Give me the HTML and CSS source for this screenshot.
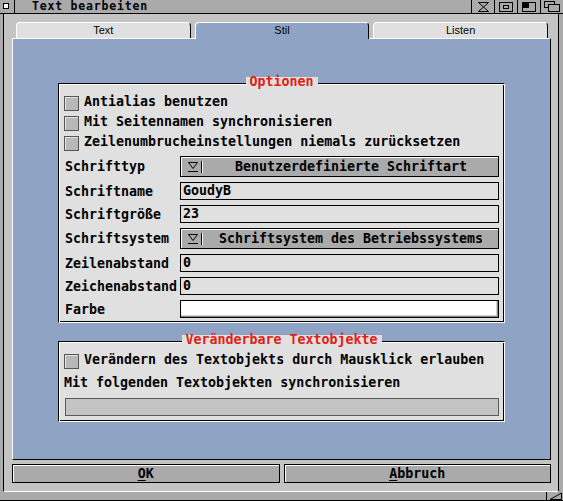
FILE: index.html
```html
<!DOCTYPE html>
<html lang="de">
<head>
<meta charset="utf-8">
<title>Text bearbeiten</title>
<link rel="stylesheet" href="styles.css">
</head>
<body>
<div class="window">
  <div class="titlebar">
    <div class="close-gadget">
      <svg width="7" height="7" viewBox="0 0 7 7"><rect x="0.5" y="0.5" width="5" height="5" fill="#fff" stroke="#000"/></svg>
    </div>
    <div class="title">Text bearbeiten</div>
    <div class="gadgets">
      <div class="gadget">
        <svg width="13" height="10" viewBox="0 0 13 10"><path d="M1.5 0.5 H11.5 L6.5 5 L11.5 9.5 H1.5 L6.5 5 Z" fill="none" stroke="#000"/></svg>
      </div>
      <div class="gadget">
        <svg width="14" height="10" viewBox="0 0 14 10"><rect x="0.5" y="0.5" width="13" height="9" fill="none" stroke="#000"/><rect x="4.5" y="3.5" width="5" height="3" fill="none" stroke="#000"/></svg>
      </div>
      <div class="gadget">
        <svg width="14" height="10" viewBox="0 0 14 10"><rect x="0.5" y="0.5" width="13" height="9" fill="none" stroke="#000"/><rect x="1" y="1" width="6" height="5" fill="#000"/></svg>
      </div>
      <div class="gadget">
        <svg width="16" height="11" viewBox="0 0 16 11"><rect x="0.5" y="0.5" width="10" height="6" fill="none" stroke="#000"/><rect x="4.5" y="3.5" width="11" height="7" fill="#aaa" stroke="#000"/></svg>
      </div>
    </div>
  </div>

  <div class="frame">
    <div class="tabs">
      <div class="tab">Text</div>
      <div class="tab active">Stil</div>
      <div class="tab">Listen</div>
    </div>

    <div class="panel">
      <div class="group">
        <div class="group-title">Optionen</div>
        <div class="form">
          <div class="check"><span class="box"></span><span class="check-text">Antialias benutzen</span></div>
          <div class="check"><span class="box"></span><span class="check-text">Mit Seitennamen synchronisieren</span></div>
          <div class="check"><span class="box"></span><span class="check-text">Zeilenumbrucheinstellungen niemals zurücksetzen</span></div>

          <span class="label">Schrifttyp</span>
          <div class="cycle">
            <svg class="cycle-icon" width="17" height="12" viewBox="0 0 17 12"><path d="M1.5 1.5 H10.5 L6 7.5 Z" fill="none" stroke="#000"/><path d="M1 10.5 H11" stroke="#000"/><path d="M14.5 0 V12" stroke="#000"/><path d="M15.5 0 V12" stroke="#fff"/></svg>
            <span class="cycle-text">Benutzerdefinierte Schriftart</span>
          </div>

          <span class="label">Schriftname</span>
          <div class="field">GoudyB</div>

          <span class="label">Schriftgröße</span>
          <div class="field">23</div>

          <span class="label">Schriftsystem</span>
          <div class="cycle">
            <svg class="cycle-icon" width="17" height="12" viewBox="0 0 17 12"><path d="M1.5 1.5 H10.5 L6 7.5 Z" fill="none" stroke="#000"/><path d="M1 10.5 H11" stroke="#000"/><path d="M14.5 0 V12" stroke="#000"/><path d="M15.5 0 V12" stroke="#fff"/></svg>
            <span class="cycle-text">Schriftsystem des Betriebssystems</span>
          </div>

          <span class="label">Zeilenabstand</span>
          <div class="field">0</div>

          <span class="label">Zeichenabstand</span>
          <div class="field">0</div>

          <span class="label">Farbe</span>
          <div class="field color"></div>
        </div>
      </div>

      <div class="group">
        <div class="group-title">Veränderbare Textobjekte</div>
        <div class="stack">
          <div class="check"><span class="box"></span><span class="check-text">Verändern des Textobjekts durch Mausklick erlauben</span></div>
          <div class="text-line">Mit folgenden Textobjekten synchronisieren</div>
          <div class="list"></div>
        </div>
      </div>
    </div>

    <div class="buttons">
      <div class="btn"><u>O</u>K</div>
      <div class="btn"><u>A</u>bbruch</div>
    </div>
  </div>

  <div class="bottombar">
    <div class="sizer">
      <svg width="13" height="8" viewBox="0 0 13 8"><path d="M1 7.5 L12.5 1 V7.5 Z" fill="none" stroke="#000"/></svg>
    </div>
  </div>
</div>
</body>
</html>
```

FILE: styles.css
```css
* {
  box-sizing: border-box;
}

html,
body {
  margin: 0;
  padding: 0;
}

body {
  width: 563px;
  height: 501px;
  overflow: hidden;
  background: #aaaaaa;
  font-family: "DejaVu Sans Mono", "Liberation Mono", monospace;
  font-weight: bold;
  font-size: 13.3px;
  color: #000;
}

.window {
  display: flex;
  flex-direction: column;
  height: 501px;
}

/* ---------- title bar ---------- */
.titlebar {
  height: 14px;
  flex: none;
  display: flex;
  align-items: stretch;
  background: #aaaaaa;
  border-bottom: 1px solid #000;
}

.close-gadget {
  width: 15px;
  border-right: 1px solid #000;
  display: flex;
  align-items: flex-start;
  padding: 3px 0 0 3px;
}

.title {
  padding-left: 17px;
  font-size: 11.5px;
  letter-spacing: 0.8px;
  line-height: 13px;
}

.gadgets {
  margin-left: auto;
  display: flex;
}

.gadget {
  width: 23px;
  border-left: 1px solid #000;
  display: flex;
  align-items: center;
  justify-content: center;
}

/* ---------- frame ---------- */
.frame {
  flex: none;
  height: 478px;
  margin: 0 4px 0 3px;
  border-left: 1px solid #000;
  border-right: 1px solid #000;
  border-bottom: 1px solid #fff;
  background: #c4c4c4;
  padding: 8px 7px 8px 8px;
  display: flex;
  flex-direction: column;
}

.tabs {
  display: flex;
  align-items: flex-start;
  gap: 4px;
  height: 16px;
  padding: 0 3px 0 4px;
}

.tab {
  flex: 1;
  height: 16px;
  background: #e0e0e0;
  border-top: 1px solid #fff;
  border-left: 1px solid #fff;
  border-right: 1px solid #000;
  border-radius: 4px 4px 0 0;
  font-family: "Liberation Sans", Arial, sans-serif;
  font-weight: normal;
  font-size: 11px;
  line-height: 15px;
  text-align: center;
}

.tab.active {
  background: #8fa4c4;
  height: 17px;
  position: relative;
  z-index: 1;
}

.panel {
  height: 422px;
  flex: none;
  background: #8fa4c4;
  border: 1px solid;
  border-color: #fff #000 #000 #fff;
  padding: 44px 45px 0 45px;
  display: flex;
  flex-direction: column;
  gap: 18px;
}

/* ---------- groups ---------- */
.group {
  position: relative;
  background: #e0e0e0;
  border: 1px solid;
  border-color: #000 #fff #fff #000;
  box-shadow: inset 1px 1px 0 #fff, inset -1px -1px 0 #000;
  padding: 12px 5px 4px 5px;
}

.group + .group {
  padding-bottom: 5px;
}

.group-title {
  position: absolute;
  top: -7px;
  left: 50%;
  transform: translateX(-50%);
  height: 10px;
  line-height: 10px;
  padding: 0 4px;
  background: #e0e0e0;
  color: #e02010;
  white-space: nowrap;
}

.form {
  display: grid;
  grid-template-columns: 116px 1fr;
  row-gap: 5px;
}

.check {
  grid-column: 1 / -1;
  display: flex;
  align-items: flex-start;
  gap: 5px;
  height: 15px;
}

.box {
  width: 15px;
  height: 15px;
  flex: none;
  border: 1px solid #555;
  background: #b8b8b8;
  box-shadow: inset 1px 1px 0 #e4e4e4;
}

.check-text {
  line-height: 12px;
  white-space: nowrap;
}

.label {
  align-self: center;
  line-height: 15px;
  margin-left: 1px;
  white-space: nowrap;
}

.cycle {
  height: 21px;
  border: 1px solid #000;
  box-shadow: inset 1px 1px 0 #fff;
  background: #aaaaaa;
  display: flex;
  align-items: center;
}

.cycle-icon {
  margin-left: 6px;
  flex: none;
}

.cycle-text {
  flex: 1;
  text-align: center;
  line-height: 15px;
  white-space: nowrap;
}

.field {
  height: 18px;
  border: 1px solid #000;
  background: #e0e0e0;
  padding-left: 2px;
  line-height: 16px;
}

.field.color {
  background: #fff;
  box-shadow: inset -1px -1px 0 #888, inset -2px -2px 0 #cfcfcf;
}

.stack {
  display: flex;
  flex-direction: column;
}

.text-line {
  margin-top: 5px;
  line-height: 18px;
  white-space: nowrap;
}

.list {
  margin: 6px 0 0 1px;
  height: 18px;
  border: 1px solid #5a5a5a;
  background: #c4c4c4;
}

/* ---------- buttons ---------- */
.buttons {
  display: flex;
  gap: 4px;
  margin-top: 4px;
  height: 19px;
}

.btn {
  flex: 1;
  border: 1px solid #000;
  box-shadow: inset 1px 1px 0 #fff;
  background: #aaaaaa;
  text-align: center;
  line-height: 17px;
}

.btn u {
  text-decoration-thickness: 1px;
  text-underline-offset: 2px;
}

/* ---------- bottom bar ---------- */
.bottombar {
  flex: none;
  height: 9px;
  background: #aaaaaa;
  border-bottom: 1px solid #000;
  display: flex;
  justify-content: flex-end;
}

.sizer {
  width: 17px;
  border-left: 1px solid #000;
  display: flex;
  align-items: flex-end;
  justify-content: center;
}
```
